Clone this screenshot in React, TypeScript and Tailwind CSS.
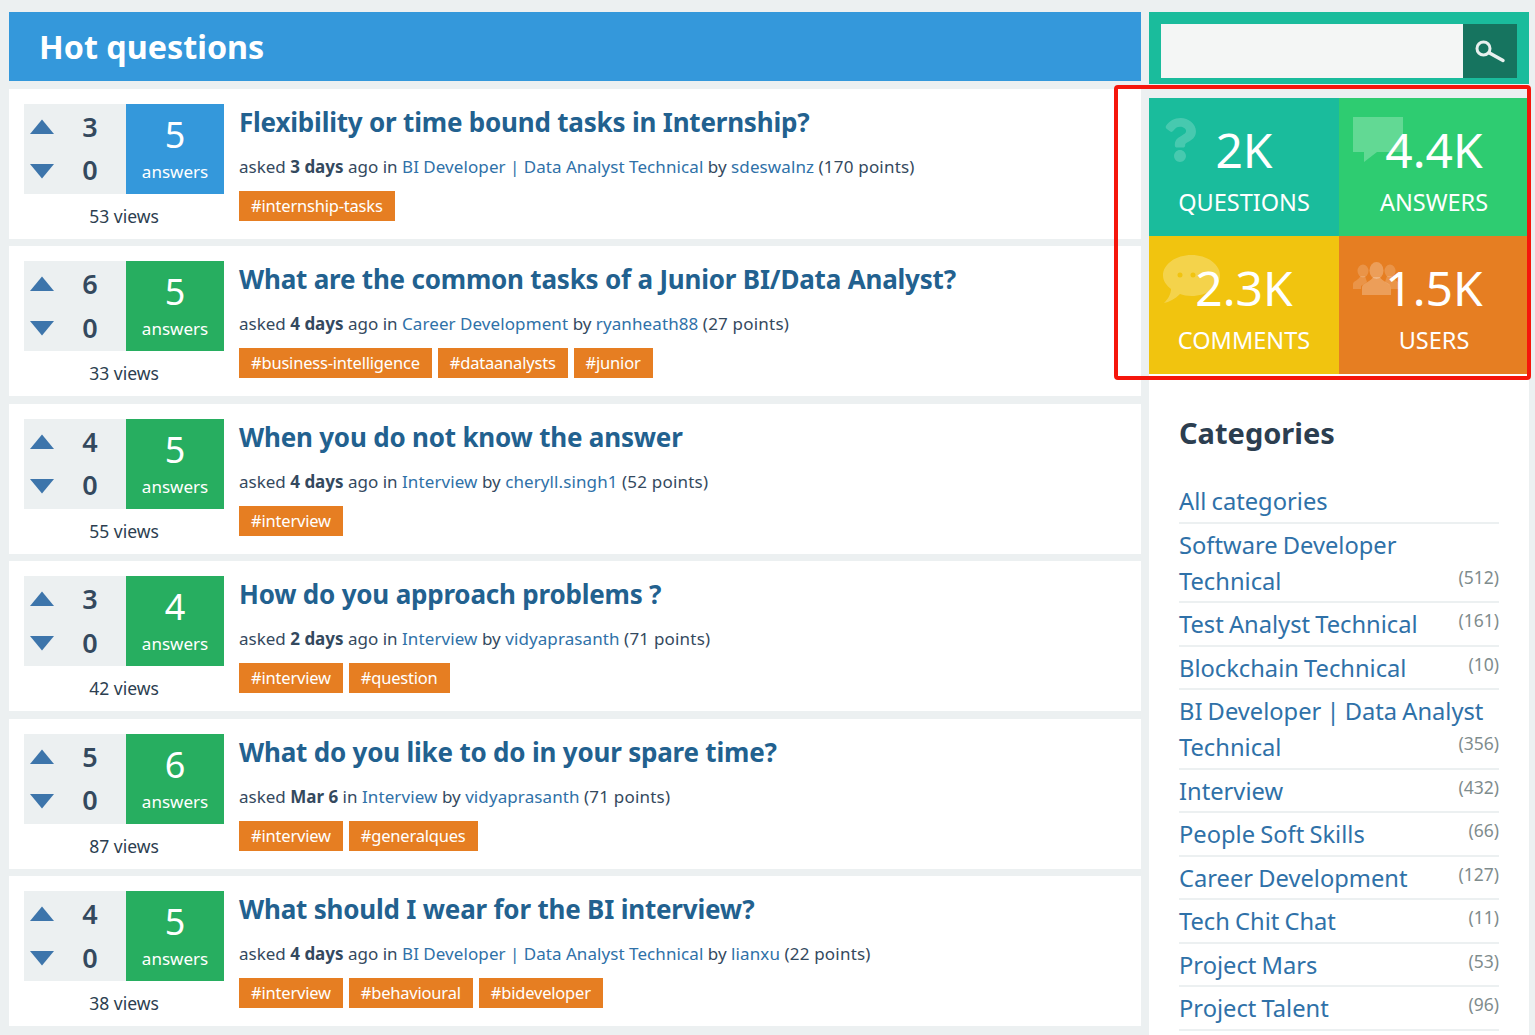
import React from "react";
import { FaQuestion } from "react-icons/fa";

interface Question {
  title: string;
  up: number;
  answers: number;
  views: number;
  when: string;
  ago: boolean;
  category: string;
  user: string;
  points: number;
  tags: string[];
}

const questions: Question[] = [
  { title: "Flexibility or time bound tasks in Internship?", up: 3, answers: 5, views: 53, when: "3 days", ago: true, category: "BI Developer | Data Analyst Technical", user: "sdeswalnz", points: 170, tags: ["#internship-tasks"] },
  { title: "What are the common tasks of a Junior BI/Data Analyst?", up: 6, answers: 5, views: 33, when: "4 days", ago: true, category: "Career Development", user: "ryanheath88", points: 27, tags: ["#business-intelligence", "#dataanalysts", "#junior"] },
  { title: "When you do not know the answer", up: 4, answers: 5, views: 55, when: "4 days", ago: true, category: "Interview", user: "cheryll.singh1", points: 52, tags: ["#interview"] },
  { title: "How do you approach problems ?", up: 3, answers: 4, views: 42, when: "2 days", ago: true, category: "Interview", user: "vidyaprasanth", points: 71, tags: ["#interview", "#question"] },
  { title: "What do you like to do in your spare time?", up: 5, answers: 6, views: 87, when: "Mar 6", ago: false, category: "Interview", user: "vidyaprasanth", points: 71, tags: ["#interview", "#generalques"] },
  { title: "What should I wear for the BI interview?", up: 4, answers: 5, views: 38, when: "4 days", ago: true, category: "BI Developer | Data Analyst Technical", user: "lianxu", points: 22, tags: ["#interview", "#behavioural", "#bideveloper"] },
];

// first holds the upper line of a name that wraps in the sidebar
const categories: { first?: string; name: string; count?: number }[] = [
  { name: "All categories" },
  { first: "Software Developer", name: "Technical", count: 512 },
  { name: "Test Analyst Technical", count: 161 },
  { name: "Blockchain Technical", count: 10 },
  { first: "BI Developer | Data Analyst", name: "Technical", count: 356 },
  { name: "Interview", count: 432 },
  { name: "People Soft Skills", count: 66 },
  { name: "Career Development", count: 127 },
  { name: "Tech Chit Chat", count: 11 },
  { name: "Project Mars", count: 53 },
  { name: "Project Talent", count: 96 },
];

const QuestionRow = ({ q, first }: { q: Question; first: boolean }) => (
  <div className="flex h-[150px] bg-white pl-[15px] pt-[15px] mb-[7.5px]">
    <div className="w-[200px] shrink-0">
      <div className="flex h-[90px]">
        <div className="w-[102px] bg-[#ecf0f1] flex">
          <div className="w-[36px] flex flex-col items-center pt-[15px]">
            <svg width="24" height="15" viewBox="0 0 24 15">
              <path d="M12 0.5 L24 15 L0 15 Z" fill="#3d75ab" />
            </svg>
            <svg width="24" height="15" viewBox="0 0 24 15" className="mt-[30px]">
              <path d="M0 0 L24 0 L12 14.5 Z" fill="#3d75ab" />
            </svg>
          </div>
          <div className="flex-1 flex flex-col items-center pr-[6px] pt-[1px] text-[27px] leading-[43.5px] font-semibold text-[#34495e]">
            <span>{q.up}</span>
            <span>0</span>
          </div>
        </div>
        <div className={`w-[98px] flex flex-col items-center text-white ${first ? "bg-[#3498db]" : "bg-[#27ae60]"}`}>
          <span className="text-[36px] leading-[44px] mt-[9px]">{q.answers}</span>
          <span className="text-[17px] leading-[24px] mt-[3px]">answers</span>
        </div>
      </div>
      <div className="text-center text-[17.5px] leading-[24px] text-[#2c3e50] mt-[10px]">{q.views} views</div>
    </div>
    <div className="pl-[15px]">
      <div className="text-[26px] leading-[36px] font-bold tracking-[-0.2px] text-[#22618f]">{q.title}</div>
      <div className="text-[17px] leading-[24px] text-[#34495e] mt-[15px]">
        asked <b>{q.when}</b>{q.ago ? " ago" : ""} in{" "}
        <span className="text-[#2f71a8] tracking-[0.1px] [word-spacing:-0.3px]">{q.category}</span>{" "}
        by <span className="text-[#2f71a8] tracking-[0.1px]">{q.user}</span>{" "}
        <span className="tracking-[0.2px]">({q.points} points)</span>
      </div>
      <div className="flex gap-[6px] mt-[12px]">
        {q.tags.map((tag) => (
          <span key={tag} className="h-[30px] px-[12px] bg-[#e67e22] text-white text-[16.5px] tracking-[-0.2px] leading-[30px]">
            {tag}
          </span>
        ))}
      </div>
    </div>
  </div>
);

const Stat = ({ value, label, color, icon }: { value: string; label: string; color: string; icon: React.ReactNode }) => (
  <div className={`relative h-[138px] flex flex-col items-center text-white ${color}`}>
    {icon}
    <span className="relative text-[48px] leading-[60px] mt-[22px]">{value}</span>
    <span className="relative text-[23.5px] leading-[34px] mt-[5px]">{label}</span>
  </div>
);

const App = () => {
  return (
    <div className="relative h-[1035px] overflow-hidden bg-[#ecf0f1] flex pt-[12px] pl-[9px] gap-[8px] font-['Noto_Sans',sans-serif]">
      <div className="w-[1132px] shrink-0">
        <div className="h-[69px] bg-[#3498db] mb-[7.9px] pl-[30px] text-[32.3px] leading-[69px] font-bold text-white">
          Hot questions
        </div>
        {questions.map((q, i) => (
          <QuestionRow key={q.title} q={q} first={i === 0} />
        ))}
      </div>

      <div className="w-[380px] shrink-0">
        <div className="h-[72px] bg-[#1abc9c] p-[12px] mb-[14px] flex">
          <div className="w-[302px] h-[54px] bg-[#f4f6f5]" />
          <div className="w-[54px] h-[54px] bg-[#16745f] flex items-center justify-center">
            <svg width="32" height="26" viewBox="0 0 32 26" fill="none" stroke="#e8f0ee">
              <circle cx="9.5" cy="10.5" r="6.5" strokeWidth="3" />
              <path d="M15.5 15 L29 22.5" strokeWidth="3.5" strokeLinecap="round" />
            </svg>
          </div>
        </div>
        <div className="grid grid-cols-2">
          <Stat
            value="2K"
            label="QUESTIONS"
            color="bg-[#1abc9c]"
            icon={<FaQuestion size={44} className="absolute left-[8.5px] top-[20px] text-white/20" />}
          />
          <Stat
            value="4.4K"
            label="ANSWERS"
            color="bg-[#2ecc71]"
            icon={
              <svg width="50" height="45" viewBox="0 0 50 45" fill="currentColor" className="absolute left-[14px] top-[19px] text-white/25">
                <path d="M0 0 H50 V35 H24 L11 45 V35 H0 Z" />
              </svg>
            }
          />
          <Stat
            value="2.3K"
            label="COMMENTS"
            color="bg-[#f1c40f]"
            icon={
              <svg width="57" height="48" viewBox="0 0 57 48" fill="currentColor" className="absolute left-[14px] top-[19px] text-white/25">
                <path
                  fillRule="evenodd"
                  d="M28.5 0 C44 0 57 9 57 20.5 C57 32 44 41 28.5 41 C24 41 20 40 17 39 C12 44 6 47 1 48 C5 44 8 39 8 34 C3 30 0 25.5 0 20.5 C0 9 13 0 28.5 0 Z M14.5 20 a2.5 2.5 0 1 0 5 0 a2.5 2.5 0 1 0 -5 0 Z M27.5 20 a2.5 2.5 0 1 0 5 0 a2.5 2.5 0 1 0 -5 0 Z"
                />
              </svg>
            }
          />
          <Stat
            value="1.5K"
            label="USERS"
            color="bg-[#e67e22]"
            icon={
              <svg width="46" height="34" viewBox="0 0 46 34" fill="currentColor" className="absolute left-[14px] top-[26px] text-white/25">
                <g opacity="0.7">
                  <ellipse cx="10" cy="9" rx="5.5" ry="6.5" />
                  <ellipse cx="37" cy="9" rx="5.5" ry="6.5" />
                  <path d="M0 27 V22 C0 19 6 18 7.5 14 H12 L14 20 L8 24 V27 Z" />
                  <path d="M46 27 V22 C46 19 40 18 38.5 14 H34 L32 20 L38 24 V27 Z" />
                </g>
                <ellipse cx="23.5" cy="8.5" rx="7" ry="8.5" />
                <path d="M9 33 V25 C9 21 18 20 20 15 H27 C29 20 38 21 38 25 V33 Z" />
              </svg>
            }
          />
        </div>
        <div className="bg-white h-[700px] px-[30px] pt-[41px]">
          <div className="text-[29px] leading-[36px] font-bold text-[#2c3e50] mb-[33px]">Categories</div>
          <div className="-mt-[4px]">
            {categories.map((c) => (
              <div key={c.first ?? c.name} className="border-b-2 border-[#ecf0f1] pb-[2.5px] pt-[3px] text-[23.7px] leading-[36px] text-[#2f71a8] [word-spacing:-1px]">
                {c.first && <div>{c.first}</div>}
                <div className="flex justify-between items-end">
                  <span>{c.name}</span>
                  {c.count !== undefined && (
                    <span className="text-[17.5px] leading-[24px] text-[#7f8c8d] mb-[10px]">({c.count})</span>
                  )}
                </div>
              </div>
            ))}
          </div>
        </div>
      </div>

      <div className="absolute left-[1114px] top-[85px] w-[417px] h-[295px] border-4 border-[#f5160c] rounded-[4px]" />
    </div>
  );
};

export default App;
